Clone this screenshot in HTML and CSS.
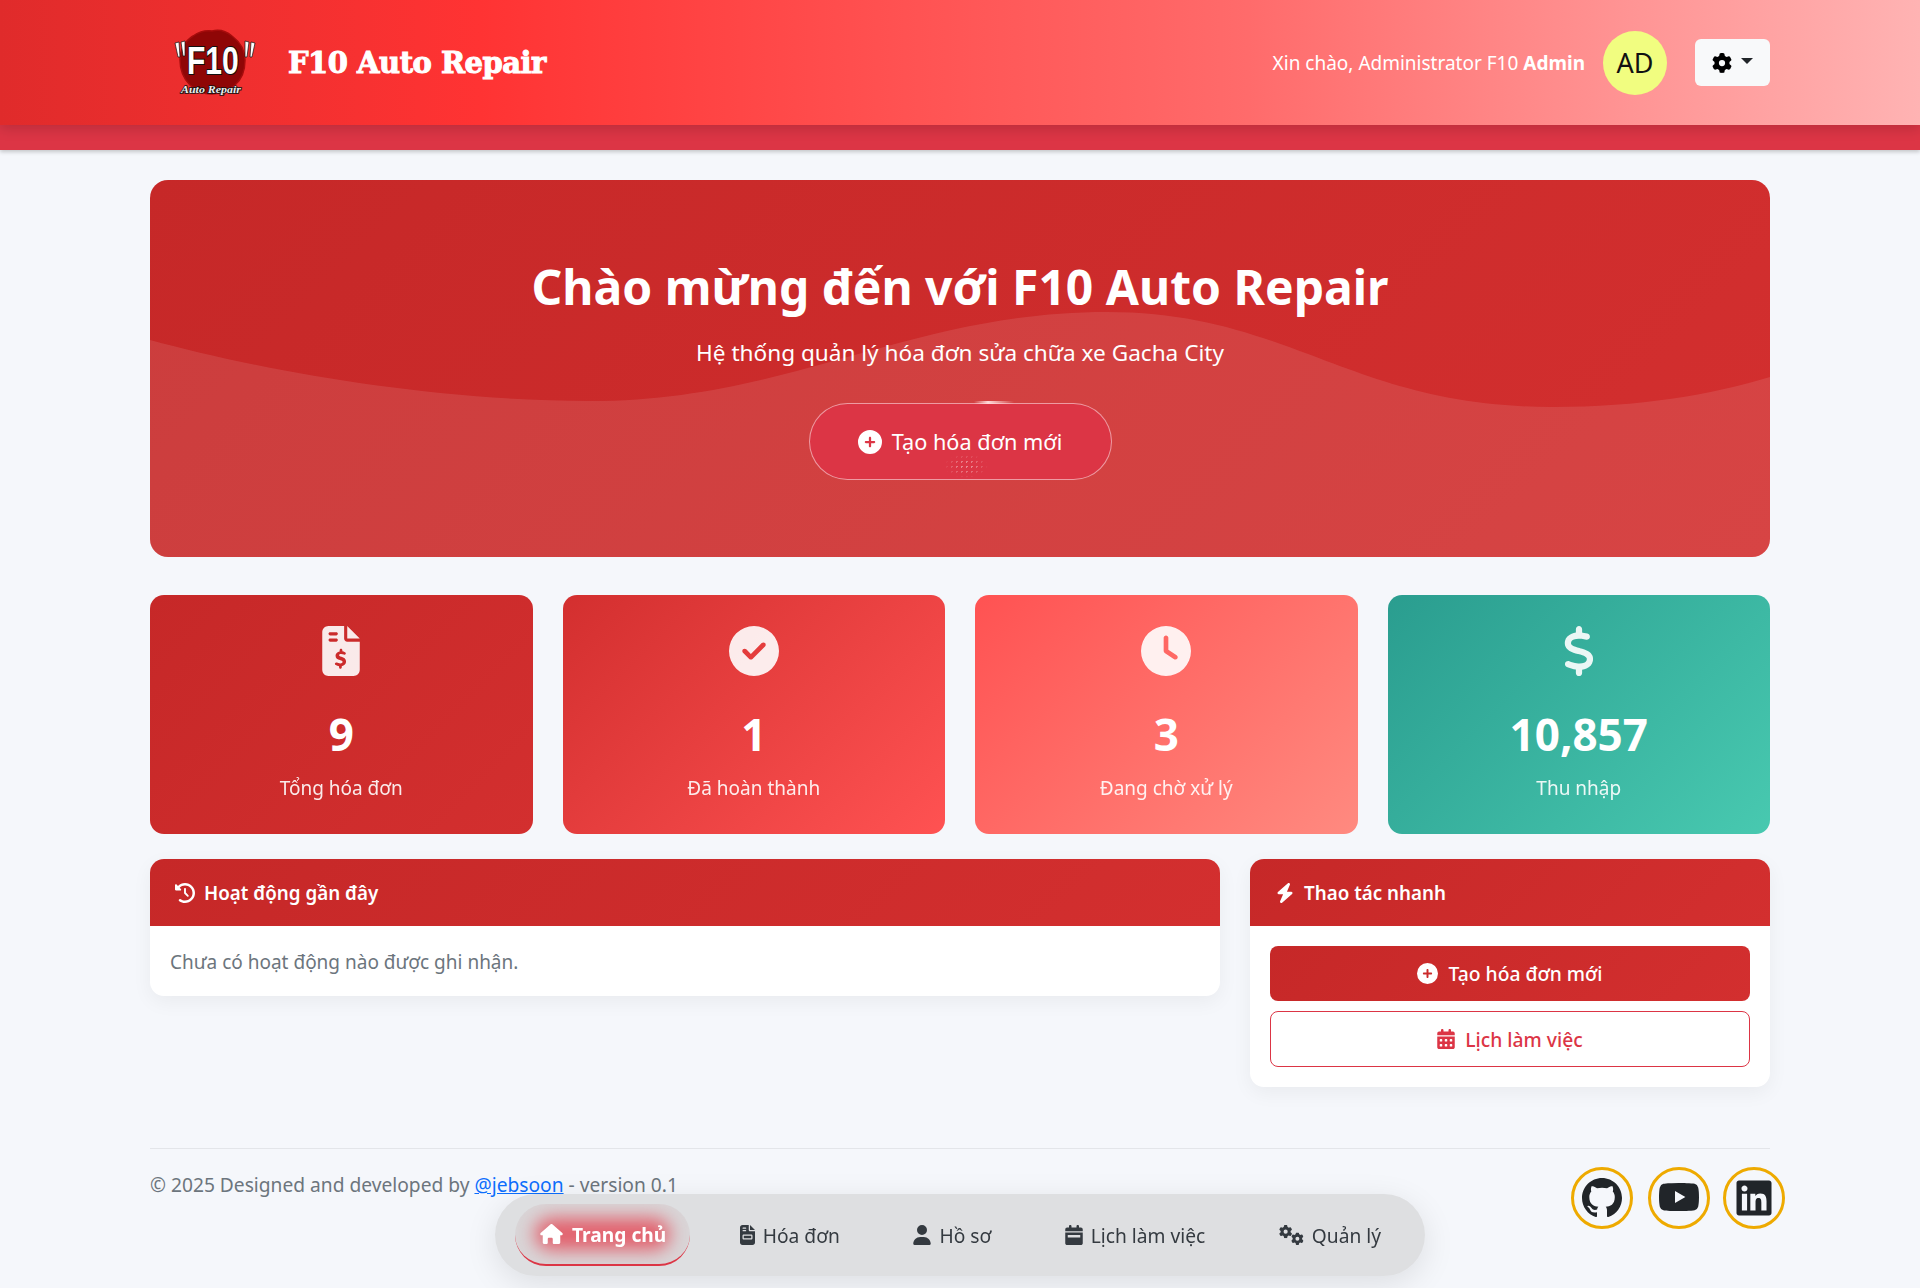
FILE: index.html
```html
<!DOCTYPE html>
<html lang="vi">
<head>
  <meta charset="UTF-8">
  <title>F10 Auto Repair</title>
  <link rel="stylesheet" href="styles.css">
</head>
<body>
  <svg class="icon-defs" width="0" height="0">
    <defs>
      <symbol id="i-plus" viewBox="0 0 512 512"><path d="M256 512A256 256 0 1 0 256 0a256 256 0 1 0 0 512zM232 344V280H168c-13.300 0-24-10.700-24-24s10.700-24 24-24h64V168c0-13.300 10.700-24 24-24s24 10.700 24 24v64h64c13.300 0 24 10.700 24 24s-10.700 24-24 24H280v64c0 13.300-10.700 24-24 24s-24-10.700-24-24z"/></symbol>
      <symbol id="i-gear" viewBox="0 0 512 512"><path fill-rule="evenodd" d="M495.900 166.600c3.200 8.700.5 18.400-6.400 24.600l-43.300 39.400c1.100 8.300 1.700 16.800 1.700 25.400s-.6 17.100-1.700 25.400l43.300 39.400c6.900 6.200 9.600 15.900 6.400 24.600-4.400 11.900-9.700 23.300-15.800 34.300l-4.700 8.100c-6.600 11-14 21.400-22.100 31.200-5.900 7.200-15.700 9.600-24.500 6.800l-55.700-17.700c-13.400 10.300-28.200 18.900-44 25.400l-12.500 57.100c-2 9.100-9 16.300-18.200 17.800-13.800 2.300-28 3.500-42.500 3.500s-28.700-1.200-42.500-3.500c-9.200-1.500-16.200-8.700-18.200-17.800l-12.500-57.100c-15.800-6.500-30.600-15.100-44-25.400l-55.600 17.800c-8.800 2.800-18.600.3-24.500-6.800-8.100-9.800-15.500-20.200-22.100-31.200l-4.700-8.100c-6.100-11-11.400-22.400-15.800-34.300-3.200-8.700-.5-18.400 6.400-24.600l43.300-39.400c-1.100-8.400-1.700-16.900-1.700-25.500s.6-17.100 1.700-25.400l-43.300-39.400c-6.900-6.200-9.600-15.900-6.400-24.600 4.400-11.900 9.700-23.300 15.800-34.300l4.700-8.100c6.600-11 14-21.400 22.100-31.200 5.900-7.200 15.700-9.600 24.500-6.800l55.700 17.700c13.400-10.300 28.200-18.900 44-25.400l12.500-57.100c2-9.100 9-16.300 18.200-17.800C227.300 1.200 241.500 0 256 0s28.700 1.200 42.500 3.500c9.200 1.500 16.200 8.700 18.200 17.800l12.500 57.100c15.800 6.500 30.600 15.100 44 25.400l55.700-17.700c8.800-2.800 18.600-.3 24.500 6.800 8.100 9.800 15.500 20.200 22.100 31.200l4.700 8.100c6.100 11 11.400 22.400 15.800 34.300zM256 336a80 80 0 1 0 0-160 80 80 0 1 0 0 160z"/></symbol>
      <symbol id="i-calendar" viewBox="0 0 448 512"><path fill-rule="evenodd" d="M128 0c17.700 0 32 14.300 32 32v32h128V32c0-17.700 14.300-32 32-32s32 14.300 32 32v32h48c26.500 0 48 21.500 48 48v48H0v-48c0-26.500 21.500-48 48-48h48V32c0-17.700 14.300-32 32-32zM0 192h448v272c0 26.500-21.500 48-48 48H48c-26.500 0-48-21.500-48-48V192zm64 80v32c0 8.800 7.200 16 16 16h32c8.800 0 16-7.200 16-16v-32c0-8.800-7.200-16-16-16H80c-8.800 0-16 7.200-16 16zm128 0v32c0 8.800 7.200 16 16 16h32c8.800 0 16-7.200 16-16v-32c0-8.800-7.200-16-16-16h-32c-8.800 0-16 7.200-16 16zm144-16c-8.800 0-16 7.200-16 16v32c0 8.800 7.200 16 16 16h32c8.800 0 16-7.200 16-16v-32c0-8.800-7.200-16-16-16h-32zM64 400v32c0 8.800 7.200 16 16 16h32c8.800 0 16-7.200 16-16v-32c0-8.800-7.200-16-16-16H80c-8.800 0-16 7.200-16 16zm144-16c-8.800 0-16 7.200-16 16v32c0 8.800 7.200 16 16 16h32c8.800 0 16-7.200 16-16v-32c0-8.800-7.200-16-16-16h-32zm112 16v32c0 8.800 7.200 16 16 16h32c8.800 0 16-7.200 16-16v-32c0-8.800-7.200-16-16-16h-32c-8.800 0-16 7.200-16 16z"/></symbol>
    </defs>
  </svg>

  <header class="topbar">
    <div class="topbar-inner">
      <a class="brand" href="#">
        <svg class="logo" viewBox="0 0 90 72" width="90" height="72">
          <path d="M42 4c7-2 14 0 20 5 8 6 13 15 13 24 0 10-3 19-10 25-7 6-15 9-23 9s-16-3-22-9c-7-7-10-16-10-25 0-10 5-19 13-24 6-4 12-6 19-5z" fill="#8f0606" stroke="#a50c0c" stroke-width="1.500"/>
          <text class="logo-f10" transform="translate(17 47) scale(1 1.3)">F10</text>
          <path class="logo-quote" d="M5 16l4-1 1 15-2 0zM11 15l4-1 0 15-2 0zM75 14l4 1-2 15-2 0zM81 15l4 1-3 14-2 0z"/>
          <text class="logo-sub" x="11" y="66" textLength="60" lengthAdjust="spacingAndGlyphs">Auto Repair</text>
        </svg>
        <span class="brand-name">F10 Auto Repair</span>
      </a>
      <div class="user-box">
        <span class="greeting">Xin chào, Administrator F10 <b>Admin</b></span>
        <span class="avatar">AD</span>
        <button class="settings-btn" type="button">
          <svg width="20" height="20"><use href="#i-gear"/></svg>
          <span class="caret"></span>
        </button>
      </div>
    </div>
  </header>
  <div class="topbar-band"></div>

  <main class="page">
    <section class="hero">
      <svg class="hero-wave" viewBox="0 0 1620 377" preserveAspectRatio="none">
        <path d="M0 160C110 190 280 221 440 221C640 221 760 132 957 132C1140 132 1200 227 1402 227C1490 227 1560 215 1620 197V377H0Z"/>
      </svg>
      <div class="hero-text">
        <h1>Chào mừng đến với F10 Auto Repair</h1>
        <p>Hệ thống quản lý hóa đơn sửa chữa xe Gacha City</p>
        <a class="hero-btn" href="#">
          <span class="hero-btn-shine"></span>
          <span class="hero-btn-dots"></span>
          <svg width="24" height="24"><use href="#i-plus"/></svg>
          Tạo hóa đơn mới
        </a>
      </div>
    </section>

    <section class="stats">
      <div class="stat stat-total">
        <svg class="stat-icon" width="38" height="50" viewBox="0 0 384 512"><path fill-rule="evenodd" d="M64 0C28.700 0 0 28.700 0 64v384c0 35.300 28.700 64 64 64h256c35.300 0 64-28.700 64-64V160H256c-17.700 0-32-14.300-32-32V0H64zM256 0v128h128L256 0zM64 80c0-8.800 7.200-16 16-16h64c8.800 0 16 7.200 16 16s-7.200 16-16 16H80c-8.800 0-16-7.200-16-16zm0 64c0-8.800 7.200-16 16-16h64c8.800 0 16 7.200 16 16s-7.200 16-16 16H80c-8.800 0-16-7.200-16-16zM192 232c-8.800 0-14 7.200-14 16v12c-24 3-42 21-42 44 0 26 21 38 44 45 19 6 28 10 28 20 0 9-10 15-24 15-12 0-24-4-34-9-8-4-15-1-19 6s-1 15 7 19c10 5 22 9 34 11v12c0 8.800 5.200 16 14 16s14-7.200 14-16v-12c26-4 44-22 44-47 0-28-23-40-47-48-18-5-25-9-25-18 0-7 9-12 21-12 10 0 20 3 28 7s15 1 19-6-1-15-7-19c-9-4-18-7-27-9v-11c0-8.800-5.200-16-14-16z"/></svg>
        <div class="stat-num">9</div>
        <div class="stat-label">Tổng hóa đơn</div>
      </div>
      <div class="stat stat-done">
        <svg class="stat-icon" width="50" height="50" viewBox="0 0 512 512"><path d="M256 512A256 256 0 1 0 256 0a256 256 0 1 0 0 512zM369 209L241 337c-9.400 9.400-24.600 9.400-33.900 0l-64-64c-9.400-9.400-9.400-24.600 0-33.900s24.600-9.400 33.900 0l47 47L335 175c9.400-9.400 24.600-9.400 33.900 0s9.400 24.600 0 33.900z"/></svg>
        <div class="stat-num">1</div>
        <div class="stat-label">Đã hoàn thành</div>
      </div>
      <div class="stat stat-wait">
        <svg class="stat-icon" width="50" height="50" viewBox="0 0 512 512"><path d="M256 0a256 256 0 1 1 0 512A256 256 0 1 1 256 0zM232 120V256c0 8 4 15.500 10.700 20l96 64c11 7.400 25.900 4.400 33.300-6.700s4.400-25.900-6.700-33.300L280 243.200V120c0-13.300-10.700-24-24-24s-24 10.700-24 24z"/></svg>
        <div class="stat-num">3</div>
        <div class="stat-label">Đang chờ xử lý</div>
      </div>
      <div class="stat stat-money">
        <svg class="stat-icon" width="32" height="50" viewBox="0 0 320 512"><path d="M160 0c17.700 0 32 14.300 32 32V67.700c1.600.2 3.100.4 4.700.7c.4.100.7.100 1.100.2l48 8.800c17.400 3.200 28.900 19.900 25.700 37.200s-19.900 28.900-37.200 25.700l-47.500-8.700c-31.300-4.600-58.900-1.500-78.300 6.200s-27.200 18.300-29 28.100c-2 10.700-.5 16.700 1.200 20.400c1.800 3.900 5.500 8.300 12.800 13.200c16.300 10.700 41.300 17.700 73.700 26.300l2.900.8c28.600 7.600 63.600 16.800 89.600 33.800c14.200 9.300 27.600 21.900 35.900 39.500c8.500 17.900 10.300 37.900 6.400 59.200c-6.900 38-33.100 63.400-65.600 76.700c-13.700 5.600-28.600 9.200-44.400 11V480c0 17.700-14.300 32-32 32s-32-14.300-32-32V445.100c-.4-.1-.9-.1-1.300-.2l-.2 0 0 0c-24.400-3.800-64.500-14.300-91.500-26.300c-16.100-7.200-23.400-26.100-16.200-42.200s26.100-23.400 42.200-16.200c20.900 9.300 55.300 18.500 75.200 21.600c31.900 4.700 58.200 2 76-5.300c16.900-6.900 24.600-16.900 26.800-28.900c1.900-10.600.4-16.700-1.300-20.400c-1.900-4-5.600-8.400-13-13.300c-16.400-10.700-41.500-17.700-74-26.300l-2.800-.7 0 0C119.400 279.300 84.400 270 58.400 253c-14.200-9.300-27.500-22-35.800-39.600c-8.400-17.900-10.100-37.900-6.100-59.200C23.700 116 52.300 91.200 84.800 78.300c13.300-5.300 27.900-8.900 43.200-11V32c0-17.700 14.300-32 32-32z"/></svg>
        <div class="stat-num">10,857</div>
        <div class="stat-label">Thu nhập</div>
      </div>
    </section>

    <section class="panels">
      <div class="panel panel-wide">
        <div class="panel-head">
          <svg width="20" height="20" viewBox="0 0 512 512"><path d="M75 75L41 41C25.900 25.900 0 36.600 0 57.900V168c0 13.300 10.700 24 24 24h110.100c21.400 0 32.100-25.900 17-41l-30.800-30.800C155 85.500 203 64 256 64c106 0 192 86 192 192s-86 192-192 192c-40.800 0-78.600-12.700-109.700-34.400-14.500-10.100-34.400-6.600-44.600 7.900s-6.600 34.400 7.900 44.600C151.200 495 201.700 512 256 512c141.400 0 256-114.600 256-256S397.400 0 256 0C185.300 0 121.300 28.700 75 75zm181 53c-13.300 0-24 10.700-24 24v104c0 6.400 2.500 12.500 7 17l72 72c9.400 9.400 24.600 9.400 33.900 0s9.400-24.600 0-33.900l-65-65V152c0-13.300-10.700-24-24-24z"/></svg>
          Hoạt động gần đây
        </div>
        <div class="panel-body panel-note">
          <p class="empty">Chưa có hoạt động nào được ghi nhận.</p>
        </div>
      </div>
      <div class="panel panel-side">
        <div class="panel-head">
          <svg width="20" height="20" viewBox="0 0 448 512"><path d="M349.400 44.600c5.900-13.700 1.500-29.700-10.600-38.500s-28.600-8-39.900 1.800l-256 224c-10 8.800-13.600 22.900-8.900 35.300S50.700 288 64 288h111.500L98.600 467.400c-5.900 13.700-1.500 29.700 10.600 38.500s28.600 8 39.900-1.800l256-224c10-8.800 13.600-22.900 8.900-35.300s-16.600-20.700-30-20.700H273.500l75.900-179.400z"/></svg>
          Thao tác nhanh
        </div>
        <div class="panel-body panel-actions">
          <a class="action action-solid" href="#">
            <svg width="21" height="21"><use href="#i-plus"/></svg>
            Tạo hóa đơn mới
          </a>
          <a class="action action-outline" href="#">
            <svg width="18" height="20"><use href="#i-calendar"/></svg>
            Lịch làm việc
          </a>
        </div>
      </div>
    </section>

    <footer class="foot">
      <p>© 2025 Designed and developed by <a href="#">@jebsoon</a> - version 0.1</p>
      <div class="socials">
        <a class="social" href="#"><svg width="40" height="40" viewBox="0 0 16 16"><path d="M8 0C3.580 0 0 3.580 0 8c0 3.540 2.290 6.530 5.470 7.590.4.070.55-.17.55-.38 0-.19-.01-.82-.01-1.490-2.010.37-2.530-.49-2.690-.94-.09-.23-.48-.94-.82-1.130-.28-.15-.68-.52-.01-.53.63-.01 1.080.58 1.230.82.72 1.210 1.870.87 2.330.66.070-.52.28-.87.51-1.070-1.780-.2-3.640-.89-3.640-3.950 0-.87.31-1.590.82-2.150-.08-.2-.36-1.020.08-2.120 0 0 .67-.21 2.200.82.64-.18 1.320-.27 2-.27s1.360.09 2 .27c1.530-1.040 2.200-.82 2.200-.82.44 1.100.16 1.920.08 2.120.51.56.82 1.270.82 2.150 0 3.070-1.870 3.750-3.650 3.950.29.25.54.73.54 1.480 0 1.070-.01 1.930-.01 2.200 0 .21.15.46.55.38A8.010 8.010 0 0 0 16 8c0-4.420-3.580-8-8-8z"/></svg></a>
        <a class="social" href="#"><svg width="40" height="40" viewBox="0 0 16 16"><path d="M8.050 2h.089c.822.003 4.987.033 6.110.335a2.010 2.010 0 0 1 1.415 1.420c.101.380.172.883.22 1.402l.01.104.022.260.008.104c.065.914.073 1.770.074 1.957v.075c-.001.194-.010 1.108-.082 2.060l-.008.105-.009.104c-.050.572-.124 1.140-.235 1.558a2.007 2.007 0 0 1-1.415 1.420c-1.160.312-5.569.334-6.180.335h-.142c-.309 0-1.587-.006-2.927-.052l-.17-.006-.087-.004-.171-.007-.171-.007c-1.110-.049-2.167-.128-2.654-.26a2.007 2.007 0 0 1-1.415-1.419c-.111-.417-.185-.986-.235-1.558L.09 9.820l-.008-.104A31.400 31.400 0 0 1 0 7.680v-.123c.002-.215.01-.958.064-1.778l.007-.103.003-.052.008-.104.022-.26.010-.104c.048-.519.119-1.023.22-1.402a2.007 2.007 0 0 1 1.415-1.420c.487-.13 1.544-.21 2.654-.26l.17-.007.172-.006.086-.003.171-.007A99.788 99.788 0 0 1 7.858 2h.193zM6.400 5.209v4.818l4.157-2.408L6.400 5.209z"/></svg></a>
        <a class="social" href="#"><svg width="40" height="40" viewBox="0 0 448 512"><path d="M416 32H31.900C14.300 32 0 46.500 0 64.300v383.400C0 465.500 14.300 480 31.900 480H416c17.600 0 32-14.500 32-32.300V64.300c0-17.800-14.400-32.300-32-32.300zM135.400 416H69V202.200h66.500V416zm-33.200-243c-21.300 0-38.500-17.300-38.500-38.500S80.900 96 102.200 96c21.200 0 38.500 17.300 38.500 38.500 0 21.300-17.200 38.500-38.500 38.500zm282.100 243h-66.400V312c0-24.800-.5-56.700-34.500-56.700-34.600 0-39.900 27-39.900 54.900V416h-66.400V202.200h63.700v29.200h.9c8.900-16.800 30.600-34.500 62.900-34.500 67.200 0 79.700 44.300 79.700 101.900V416z"/></svg></a>
      </div>
    </footer>
  </main>

  <nav class="dock">
    <a class="dock-item active" href="#">
      <svg width="25" height="20" viewBox="0 0 576 512"><path d="M575.800 255.500c0 18-15 32.100-32 32.100h-32l.7 160.200c0 2.700-.2 5.400-.5 8.100V472c0 22.100-17.900 40-40 40H352c-17.700 0-32-14.300-32-32V384c0-17.700-14.300-32-32-32h-64c-17.700 0-32 14.300-32 32v96c0 17.700-14.300 32-32 32H104c-22.100 0-40-17.900-40-40V287.600H32c-18 0-32-14-32-32.100 0-9 3-17 10-24L266.400 8c7-7 15-8 22-8s15 2 21 7l255.400 224.500c8 7 12 15 11 24z"/></svg>
      <span>Trang chủ</span>
    </a>
    <a class="dock-item" href="#">
      <svg width="15" height="20" viewBox="0 0 384 512"><path fill-rule="evenodd" d="M64 0C28.700 0 0 28.700 0 64v384c0 35.300 28.700 64 64 64h256c35.300 0 64-28.700 64-64V160H256c-17.700 0-32-14.300-32-32V0H64zM256 0v128h128L256 0zM64 80c0-8.800 7.200-16 16-16h64c8.800 0 16 7.200 16 16s-7.200 16-16 16H80c-8.800 0-16-7.200-16-16zm0 64c0-8.800 7.200-16 16-16h64c8.800 0 16 7.200 16 16s-7.200 16-16 16H80c-8.800 0-16-7.200-16-16zm32 96h192c17.700 0 32 14.300 32 32v64c0 17.700-14.300 32-32 32H96c-17.700 0-32-14.300-32-32v-64c0-17.700 14.300-32 32-32zm0 32v64h192v-64H96z"/></svg>
      Hóa đơn
    </a>
    <a class="dock-item" href="#">
      <svg width="18" height="20" viewBox="0 0 448 512"><path d="M224 256A128 128 0 1 0 224 0a128 128 0 1 0 0 256zm-45.700 48C79.800 304 0 383.800 0 482.300 0 498.700 13.300 512 29.700 512h388.600c16.400 0 29.700-13.300 29.700-29.700C448 383.800 368.200 304 269.700 304h-91.400z"/></svg>
      Hồ sơ
    </a>
    <a class="dock-item" href="#">
      <svg width="18" height="20" viewBox="0 0 448 512"><path fill-rule="evenodd" d="M128 0c17.700 0 32 14.300 32 32v32h128V32c0-17.700 14.300-32 32-32s32 14.300 32 32v32h48c26.500 0 48 21.500 48 48v48H0v-48c0-26.500 21.500-48 48-48h48V32c0-17.700 14.300-32 32-32zM0 192h448v272c0 26.500-21.500 48-48 48H48c-26.500 0-48-21.500-48-48V192zm64 64v64h320v-64H64z"/></svg>
      Lịch làm việc
    </a>
    <a class="dock-item" href="#">
      <svg width="25" height="20" viewBox="0 0 640 512"><use href="#i-gear" x="0" y="0" width="340" height="340"/><use href="#i-gear" x="310" y="190" width="322" height="322"/></svg>
      Quản lý
    </a>
  </nav>
</body>
</html>
```

FILE: styles.css
```css
* {
  box-sizing: border-box;
}
html, body {
  margin: 0;
  padding: 0;
}
body {
  height: 1288px;
  overflow: hidden;
  background-color: #f5f7fb;
  font-family: 'Noto Sans', 'Open Sans', sans-serif;
  font-size: 19px;
  color: #212529;
}
a {
  text-decoration: none;
}
svg {
  fill: currentColor;
  flex: none;
}
.icon-defs {
  position: absolute;
}

/* top bar */
.topbar {
  height: 125px;
  background: linear-gradient(90deg, #e02b2b 0%, #ff3333 25%, #ff6b6b 65%, #ffb3b3 100%);
  box-shadow: 0 4px 12px rgba(0, 0, 0, 0.15);
  position: relative;
}
.topbar-inner {
  width: 1620px;
  height: 100%;
  margin: 0 auto;
  display: flex;
  align-items: center;
  justify-content: space-between;
}
.topbar-band {
  height: 25px;
  background-color: #dc3545;
  box-shadow: 0 2px 4px rgba(0, 0, 0, 0.2);
}
.brand {
  display: flex;
  align-items: center;
  gap: 28px;
  margin-left: 20px;
  color: #fff;
}
.logo-f10 {
  font-family: 'Liberation Sans', sans-serif;
  font-size: 30px;
  font-weight: 700;
  fill: #fff;
  stroke: #111;
  stroke-width: 1.5px;
  paint-order: stroke;
}
.logo-quote {
  fill: #fff;
  stroke: #111;
  stroke-width: 0.7px;
}
.logo-sub {
  font-family: 'Liberation Serif', serif;
  font-size: 11px;
  font-style: italic;
  font-weight: 700;
  fill: #eee;
  stroke: #111;
  stroke-width: 1.5px;
  paint-order: stroke;
}
.brand-name {
  font-family: 'DejaVu Serif', serif;
  font-size: 29px;
  font-weight: 700;
  -webkit-text-stroke: 1px #fff;
  letter-spacing: -0.5px;
}
.user-box {
  display: flex;
  align-items: center;
}
.greeting {
  color: #fff;
}
.avatar {
  width: 64px;
  height: 64px;
  margin: 0 28px 0 18px;
  border-radius: 50%;
  background-color: #f1fd80;
  color: #111;
  font-size: 27px;
  display: flex;
  align-items: center;
  justify-content: center;
}
.settings-btn {
  width: 75px;
  height: 47px;
  border: none;
  border-radius: 6px;
  background-color: #f8f9fa;
  color: #000;
  display: flex;
  align-items: center;
  justify-content: center;
  gap: 9px;
}
.caret {
  border-top: 6px solid #212529;
  border-left: 6px solid transparent;
  border-right: 6px solid transparent;
  margin-bottom: 4px;
}

/* page */
.page {
  width: 1620px;
  margin: 30px auto 0;
}
.hero {
  height: 377px;
  position: relative;
  overflow: hidden;
  border-radius: 18px;
  background: linear-gradient(135deg, #c62828, #d32f2f);
  color: #fff;
  text-align: center;
}
.hero-wave {
  position: absolute;
  left: 0;
  top: 0;
  width: 100%;
  height: 100%;
  fill: rgba(255, 255, 255, 0.1);
}
.hero-text {
  position: relative;
  padding-top: 78px;
}
.hero h1 {
  margin: 0;
  font-size: 48px;
  line-height: 58px;
  font-weight: 700;
}
.hero p {
  margin: 21px 0 0;
  font-size: 22.6px;
  line-height: 32px;
}
.hero-btn {
  position: relative;
  width: 303px;
  height: 77px;
  margin: 34px auto 0;
  border-radius: 39px;
  border: 1px solid rgba(255, 255, 255, 0.5);
  background-color: #dc3545;
  color: #fff;
  font-size: 21.7px;
  display: flex;
  align-items: center;
  justify-content: center;
  gap: 10px;
}
.hero-btn-shine {
  position: absolute;
  left: 164px;
  top: -3px;
  width: 40px;
  height: 3px;
  background: linear-gradient(90deg, transparent, #ffd9d9 35%, transparent);
}
.hero-btn-dots {
  position: absolute;
  left: 134px;
  top: 50px;
  width: 44px;
  height: 24px;
  background-image: radial-gradient(rgba(255, 255, 255, 0.4) 1px, transparent 1px);
  background-size: 5px 5px;
  -webkit-mask-image: radial-gradient(closest-side, #000 30%, transparent);
}

/* stat cards */
.stats {
  display: grid;
  grid-template-columns: repeat(4, 1fr);
  gap: 30px;
  margin-top: 38px;
}
.stat {
  height: 239px;
  padding-top: 31px;
  border-radius: 14px;
  color: #fff;
  text-align: center;
}
.stat-total {
  background: linear-gradient(135deg, #c62828, #d32f2f);
}
.stat-done {
  background: linear-gradient(135deg, #d32f2f, #ff5252);
}
.stat-wait {
  background: linear-gradient(135deg, #ff5252, #ff8a80);
}
.stat-money {
  background: linear-gradient(135deg, #2a9d8f, #48c9b0);
}
.stat-icon {
  display: block;
  margin: 0 auto;
  opacity: 0.9;
}
.stat-num {
  margin-top: 24px;
  font-size: 44px;
  line-height: 68px;
  font-weight: 700;
}
.stat-label {
  margin-top: 6px;
  line-height: 28px;
  opacity: 0.9;
}

/* panels */
.panels {
  display: flex;
  align-items: flex-start;
  gap: 30px;
  margin-top: 25px;
}
.panel {
  background-color: #fff;
  border-radius: 14px;
  overflow: hidden;
  box-shadow: 0 6px 20px rgba(0, 0, 0, 0.05);
}
.panel-wide {
  flex: 1;
}
.panel-side {
  width: 520px;
}
.panel-head {
  height: 67px;
  padding: 0 25px;
  background: linear-gradient(135deg, #c62828, #d32f2f);
  color: #fff;
  font-size: 18.8px;
  font-weight: 600;
  display: flex;
  align-items: center;
  gap: 9px;
}
.panel-body {
  padding: 20px;
}
.panel-note {
  padding: 21px 20px 19px;
}
.empty {
  margin: 0;
  color: #6c757d;
  line-height: 30px;
}
.panel-actions {
  display: flex;
  flex-direction: column;
  gap: 10px;
}
.action {
  height: 55px;
  border-radius: 8px;
  font-size: 19.3px;
  font-weight: 500;
  display: flex;
  align-items: center;
  justify-content: center;
  gap: 10px;
}
.action-solid {
  background: linear-gradient(135deg, #c62828, #d32f2f);
  color: #fff;
}
.action-outline {
  height: 56px;
  border: 1px solid #dc3545;
  color: #dc3545;
}

/* footer */
.foot {
  margin-top: 61px;
  padding-top: 18px;
  border-top: 1px solid #e3e5e9;
  display: flex;
  justify-content: space-between;
  align-items: flex-start;
  color: #6c757d;
  font-size: 19.2px;
}
.foot p {
  margin: 4px 0 0;
  line-height: 27px;
}
.foot a {
  color: #0d6efd;
  text-decoration: underline;
}
.socials {
  display: flex;
  gap: 13px;
  margin-right: -15px;
}
.foot .social {
  width: 62px;
  height: 62px;
  border: 3px solid #eeaa00;
  border-radius: 50%;
  color: #212529;
  display: flex;
  align-items: center;
  justify-content: center;
}
.foot .social:first-child {
  margin-right: 2px;
}

/* bottom dock */
.dock {
  position: fixed;
  left: 495px;
  top: 1194px;
  width: 930px;
  height: 82px;
  padding: 0 20px;
  border-radius: 41px;
  background-color: #dedfe1;
  box-shadow: 0 8px 32px rgba(0, 0, 0, 0.1);
  display: flex;
  align-items: center;
  justify-content: space-between;
}
.dock-item {
  height: 62px;
  padding: 0 24px;
  border-radius: 31px;
  color: #343a40;
  font-size: 19.2px;
  display: flex;
  align-items: center;
  gap: 8px;
}
.dock-item.active {
  position: relative;
  overflow: hidden;
  color: #fff;
  font-weight: 700;
  background-color: #d9d5d7;
  border-bottom: 2px solid #dc3545;
}
/* blurred red glow behind the active label */
.dock-item.active::before {
  content: "";
  position: absolute;
  left: 20px;
  right: 20px;
  top: 14px;
  bottom: 14px;
  border-radius: 16px;
  background-color: #e2606c;
  filter: blur(9px);
}
.dock-item.active svg, .dock-item.active span {
  position: relative;
}
```
